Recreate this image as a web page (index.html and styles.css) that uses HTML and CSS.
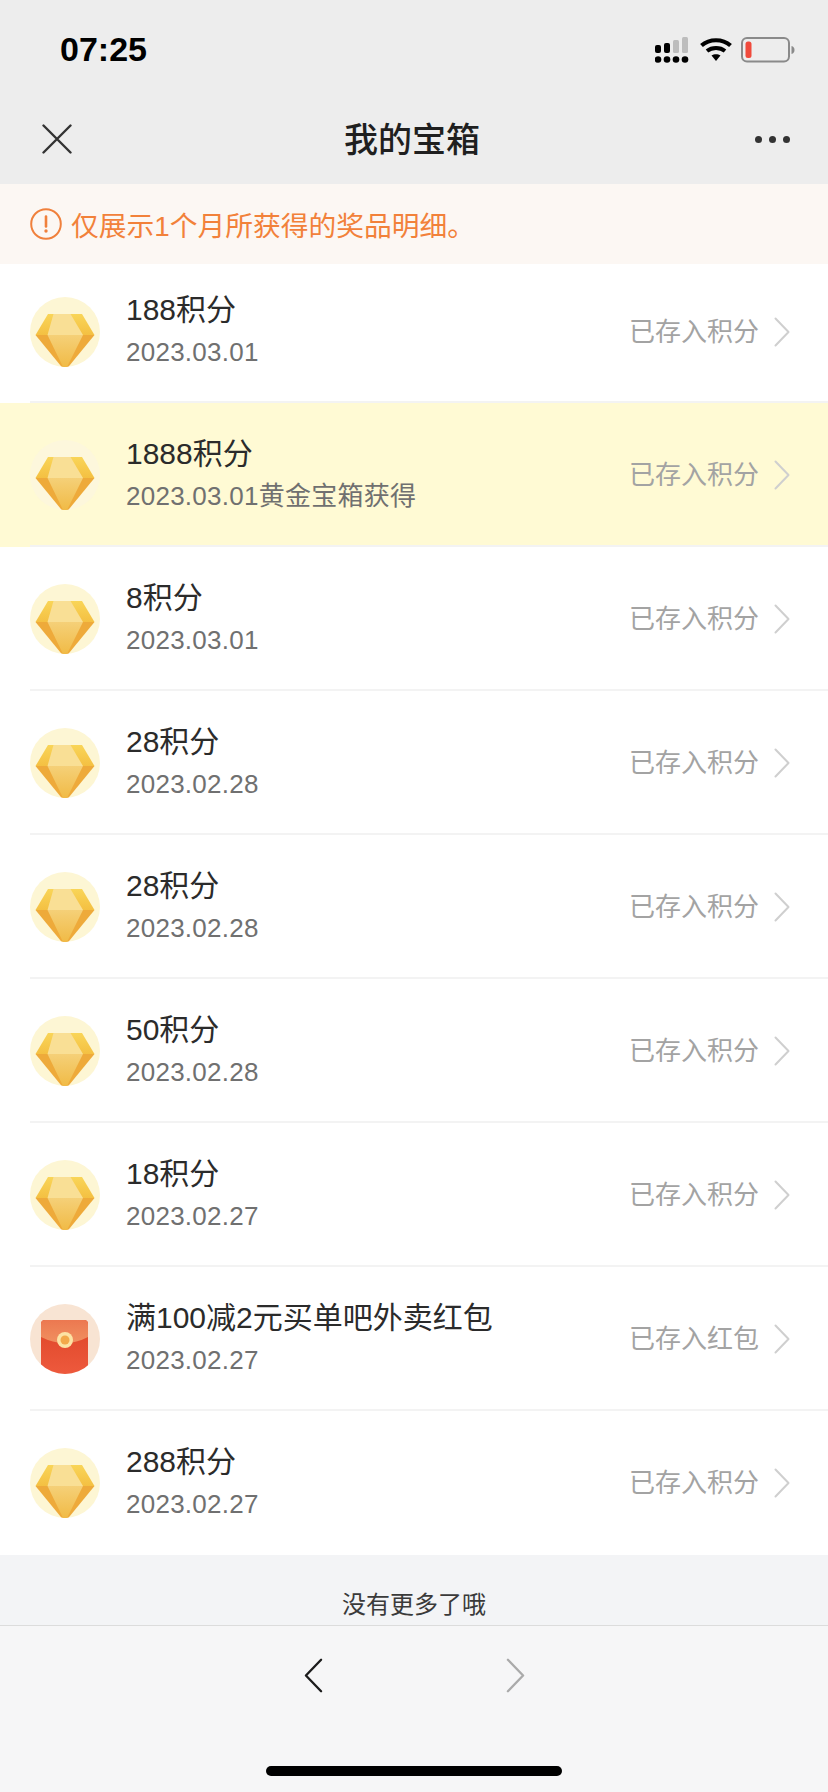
FILE: index.html
```html
<!DOCTYPE html>
<html lang="zh-CN">
<head>
<meta charset="utf-8">
<title>我的宝箱</title>
<link rel="stylesheet" href="styles.css">
</head>
<body>
<svg class="defs" width="0" height="0" aria-hidden="true">
  <defs>
    <linearGradient id="gemCenter" x1="0" y1="0" x2="0" y2="1">
      <stop offset="0" stop-color="#f5d078"/>
      <stop offset="1" stop-color="#f0b840"/>
    </linearGradient>
    <linearGradient id="gemTop" x1="0" y1="0" x2="0" y2="1">
      <stop offset="0" stop-color="#f9d558"/>
      <stop offset="1" stop-color="#f4c042"/>
    </linearGradient>
    <linearGradient id="packFlap" x1="0" y1="0" x2="0" y2="1">
      <stop offset="0" stop-color="#ec7850"/>
      <stop offset="1" stop-color="#f09060"/>
    </linearGradient>
    <linearGradient id="packBody" x1="0" y1="0" x2="0" y2="1">
      <stop offset="0" stop-color="#dd4526"/>
      <stop offset="1" stop-color="#ee5a3e"/>
    </linearGradient>
    <clipPath id="disc"><circle cx="35" cy="35" r="35"/></clipPath>
    <symbol id="gem" viewBox="0 0 70 70">
      <g clip-path="url(#disc)">
        <path d="M18 17H52L64.500 38H5.500Z" fill="url(#gemTop)"/>
        <path d="M23.500 17H40.500L53 38H17.500Z" fill="#f9df95"/>
        <path d="M5.500 38H64.500L35 74Z" fill="#eeaa3a"/>
        <path d="M17.500 38H53L35 74Z" fill="url(#gemCenter)"/>
      </g>
    </symbol>
    <symbol id="packet" viewBox="0 0 70 70">
      <g clip-path="url(#disc)">
        <path d="M11 20a4 4 0 0 1 4-4H54a4 4 0 0 1 4 4V72H11Z" fill="url(#packBody)"/>
        <path d="M11 20a4 4 0 0 1 4-4H54a4 4 0 0 1 4 4V33Q35 45 11 33Z" fill="url(#packFlap)"/>
        <circle cx="35" cy="36" r="8" fill="#fce3a4"/>
        <circle cx="35" cy="36" r="4.500" fill="#f3a94a"/>
      </g>
    </symbol>
    <symbol id="chev" viewBox="0 0 16 30">
      <path d="M1.500 1.500 14.500 15 1.500 28.500" fill="none" stroke="currentColor" stroke-width="2" stroke-linecap="round" stroke-linejoin="round"/>
    </symbol>
  </defs>
</svg>

<div class="page">
  <div class="status">
    <span class="time">07:25</span>
    <div class="status-icons">
      <svg class="sig" width="34" height="26" viewBox="0 0 34 26">
        <rect x="0" y="8" width="6" height="8" rx="2" fill="#000"/>
        <rect x="9" y="6" width="6" height="10" rx="2" fill="#000"/>
        <rect x="18" y="3" width="6" height="13" rx="1.500" fill="#bdbdbd"/>
        <rect x="27" y="0" width="6" height="16" rx="1.500" fill="#bdbdbd"/>
        <circle cx="3" cy="22.500" r="3.300" fill="#000"/>
        <circle cx="12" cy="22.500" r="3.300" fill="#000"/>
        <circle cx="21" cy="22.500" r="3.300" fill="#000"/>
        <circle cx="30" cy="22.500" r="3.300" fill="#000"/>
      </svg>
      <svg class="wifi" width="32" height="25" viewBox="0 0 32 25">
        <path d="M1.500 8.500C9.500 1.500 22.500 1.500 30.500 8.500" fill="none" stroke="#000" stroke-width="4.200"/>
        <path d="M7 14C12 10 20 10 25 14" fill="none" stroke="#000" stroke-width="4"/>
        <path d="M11.500 18.500C14 16.800 18 16.800 20.500 18.500L16 24Z" fill="#000"/>
      </svg>
      <svg class="batt" width="54" height="26" viewBox="0 0 54 26">
        <rect x="1" y="1" width="47" height="23.500" rx="5" fill="none" stroke="#8a8a8a" stroke-width="2"/>
        <rect x="4.500" y="4.500" width="6" height="16.500" rx="2.500" fill="#f04a3c"/>
        <path d="M50.500 9C52.500 9.500 53.500 11 53.500 13S52.500 16.500 50.500 17Z" fill="#8a8a8a"/>
      </svg>
    </div>
  </div>

  <div class="nav">
    <svg class="close" width="30" height="30" viewBox="0 0 30 30">
      <path d="M1.500 1.500 28.500 28.500M28.500 1.500 1.500 28.500" stroke="#333" stroke-width="2.400" stroke-linecap="round"/>
    </svg>
    <h1 class="title">我的宝箱</h1>
    <div class="more"><i></i><i></i><i></i></div>
  </div>

  <div class="notice">
    <svg class="notice-icon" width="32" height="32" viewBox="0 0 32 32">
      <circle cx="16" cy="16" r="14.800" fill="none" stroke="#f0803c" stroke-width="2"/>
      <path d="M16 8.500V18.500" stroke="#f0803c" stroke-width="2.600" stroke-linecap="round"/>
      <circle cx="16" cy="23" r="1.700" fill="#f0803c"/>
    </svg>
    <span>仅展示1个月所获得的奖品明细。</span>
  </div>

  <div class="list">
    <div class="row">
      <svg class="thumb"><circle class="disc" cx="35" cy="35" r="35"/><use href="#gem"/></svg>
      <div class="info"><div class="name">188积分</div><div class="date">2023.03.01</div></div>
      <span class="state">已存入积分</span><svg class="chev"><use href="#chev"/></svg>
    </div>
    <div class="row hl">
      <svg class="thumb"><circle class="disc" cx="35" cy="35" r="35"/><use href="#gem"/></svg>
      <div class="info"><div class="name">1888积分</div><div class="date">2023.03.01黄金宝箱获得</div></div>
      <span class="state">已存入积分</span><svg class="chev"><use href="#chev"/></svg>
    </div>
    <div class="row">
      <svg class="thumb"><circle class="disc" cx="35" cy="35" r="35"/><use href="#gem"/></svg>
      <div class="info"><div class="name">8积分</div><div class="date">2023.03.01</div></div>
      <span class="state">已存入积分</span><svg class="chev"><use href="#chev"/></svg>
    </div>
    <div class="row">
      <svg class="thumb"><circle class="disc" cx="35" cy="35" r="35"/><use href="#gem"/></svg>
      <div class="info"><div class="name">28积分</div><div class="date">2023.02.28</div></div>
      <span class="state">已存入积分</span><svg class="chev"><use href="#chev"/></svg>
    </div>
    <div class="row">
      <svg class="thumb"><circle class="disc" cx="35" cy="35" r="35"/><use href="#gem"/></svg>
      <div class="info"><div class="name">28积分</div><div class="date">2023.02.28</div></div>
      <span class="state">已存入积分</span><svg class="chev"><use href="#chev"/></svg>
    </div>
    <div class="row">
      <svg class="thumb"><circle class="disc" cx="35" cy="35" r="35"/><use href="#gem"/></svg>
      <div class="info"><div class="name">50积分</div><div class="date">2023.02.28</div></div>
      <span class="state">已存入积分</span><svg class="chev"><use href="#chev"/></svg>
    </div>
    <div class="row">
      <svg class="thumb"><circle class="disc" cx="35" cy="35" r="35"/><use href="#gem"/></svg>
      <div class="info"><div class="name">18积分</div><div class="date">2023.02.27</div></div>
      <span class="state">已存入积分</span><svg class="chev"><use href="#chev"/></svg>
    </div>
    <div class="row">
      <svg class="thumb"><circle class="disc red" cx="35" cy="35" r="35"/><use href="#packet"/></svg>
      <div class="info"><div class="name">满100减2元买单吧外卖红包</div><div class="date">2023.02.27</div></div>
      <span class="state">已存入红包</span><svg class="chev"><use href="#chev"/></svg>
    </div>
    <div class="row">
      <svg class="thumb"><circle class="disc" cx="35" cy="35" r="35"/><use href="#gem"/></svg>
      <div class="info"><div class="name">288积分</div><div class="date">2023.02.27</div></div>
      <span class="state">已存入积分</span><svg class="chev"><use href="#chev"/></svg>
    </div>
  </div>

  <div class="end">没有更多了哦</div>

  <div class="toolbar">
    <div class="arrows">
      <svg class="arrow back"><use href="#chev"/></svg>
      <svg class="arrow fwd"><use href="#chev"/></svg>
    </div>
    <div class="home"></div>
  </div>
</div>
</body>
</html>
```
FILE: styles.css
```css
* { box-sizing: border-box; }
html, body { margin: 0; padding: 0; }
body {
  width: 828px;
  height: 1792px;
  overflow: hidden;
  background: #fff;
  font-family: "Liberation Sans", "Noto Sans CJK SC", sans-serif;
  color: #2b2b2b;
}
.defs { position: absolute; }
.page { display: flex; flex-direction: column; height: 1792px; }

.status {
  height: 92px;
  background: #ededed;
  display: flex;
  align-items: flex-start;
  justify-content: space-between;
  padding: 31px 33px 0 60px;
}
.time { font-size: 34px; line-height: 37px; font-weight: 700; color: #000; }
.status-icons { display: flex; align-items: flex-start; gap: 11px; padding-top: 6px; }
.batt { margin-left: -2px; }

.nav {
  height: 92px;
  background: #ededed;
  display: flex;
  align-items: center;
  justify-content: space-between;
  padding: 2px 38px 0 42px;
  position: relative;
}
.title {
  margin: 0;
  position: absolute;
  left: 344px;
  top: 26px;
  font-size: 34px;
  line-height: 44px;
  font-weight: 500;
  color: #1f1f1f;
}
.more { display: flex; gap: 7px; }
.more i { width: 7px; height: 7px; border-radius: 50%; background: #333; display: block; }

.notice {
  height: 80px;
  background: #fcf7f3;
  display: flex;
  align-items: center;
  gap: 9px;
  padding: 0 0 1px 30px;
  color: #f2813a;
  font-size: 27.750px;
  position: relative;
  z-index: 1;
}

.list { margin-top: -4px; background: #fff; }
.row {
  height: 144px;
  display: flex;
  align-items: center;
  padding: 0 38px 0 30px;
  position: relative;
}
.row:first-child { height: 143px; }
.row::after {
  content: "";
  position: absolute;
  left: 30px;
  right: 0;
  bottom: 0;
  height: 2px;
  background: #f3f3f3;
}
.row:last-child::after { display: none; }
.hl { background: #fffad4; }
.thumb { width: 70px; height: 70px; flex: none; }
.disc { fill: #fdf6d4; }
.hl .disc { fill: #fdf7dc; }
.disc.red { fill: #f8e4d3; }
.info { flex: 1; margin-left: 26px; }
.name { font-size: 30px; line-height: 36px; color: #2b2b2b; margin-top: -1px; }
.date { font-size: 26px; line-height: 36px; color: #707070; margin-top: 6px; letter-spacing: 0.250px; }
.state { font-size: 26px; line-height: 36px; color: #a3a3a3; }
.chev { width: 16px; height: 30px; margin-left: 15px; color: #cfcfcf; }

.end {
  height: 70px;
  background: #f3f4f6;
  font-size: 24px;
  line-height: 34px;
  color: #3a3a3a;
  text-align: center;
  padding-top: 33px;
  overflow: hidden;
}

.toolbar {
  flex: 1;
  background: #f6f6f7;
  border-top: 1px solid #dcdcdc;
  display: flex;
  flex-direction: column;
  align-items: center;
  padding-top: 32px;
}
.arrows { display: flex; gap: 183px; margin-left: 1px; }
.arrow { width: 19px; height: 35px; display: block; }
.back { color: #1c1c1c; transform: scaleX(-1); }
.fwd { color: #aaa; }
.home {
  width: 296px;
  height: 10px;
  border-radius: 5px;
  background: #000;
  margin-top: 73px;
}
```
